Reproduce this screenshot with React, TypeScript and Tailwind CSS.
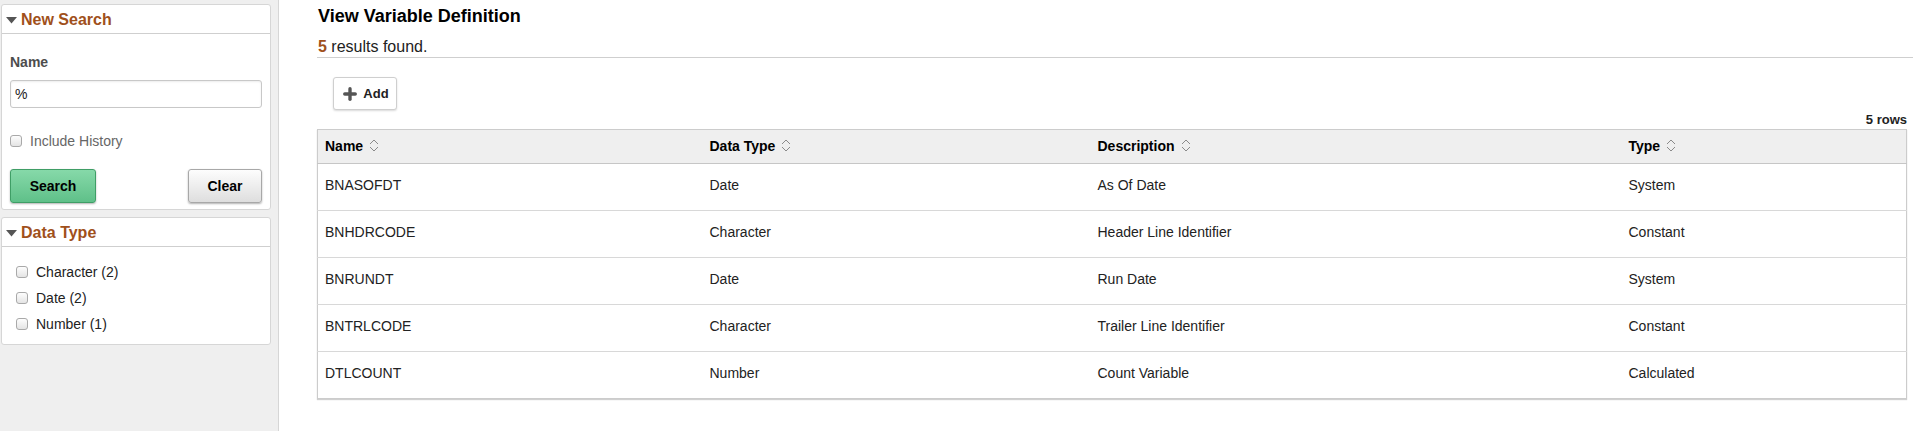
import { Plus } from "lucide-react"

const rows = [
  { name: "BNASOFDT", dataType: "Date", description: "As Of Date", type: "System" },
  { name: "BNHDRCODE", dataType: "Character", description: "Header Line Identifier", type: "Constant" },
  { name: "BNRUNDT", dataType: "Date", description: "Run Date", type: "System" },
  { name: "BNTRLCODE", dataType: "Character", description: "Trailer Line Identifier", type: "Constant" },
  { name: "DTLCOUNT", dataType: "Number", description: "Count Variable", type: "Calculated" },
]

const facets = ["Character (2)", "Date (2)", "Number (1)"]

function Caret() {
  return (
    <svg width="11" height="7" viewBox="0 0 11 7" className="shrink-0">
      <path d="M0 0 L11 0 L5.5 6.5 Z" fill="#555" />
    </svg>
  )
}

function SortIcon() {
  return (
    <svg width="10" height="13" viewBox="0 0 10 13" className="ml-[6px] inline-block align-[-1px]">
      <path d="M1 5 L5 1 L9 5" fill="none" stroke="#8a8a8a" strokeWidth="1" />
      <path d="M1 8 L5 12 L9 8" fill="none" stroke="#8a8a8a" strokeWidth="1" />
    </svg>
  )
}

function Checkbox() {
  return (
    <span className="inline-block h-[12px] w-[12px] shrink-0 rounded-[3px] border border-[#a9a9a9] bg-gradient-to-b from-[#fdfdfd] to-[#e4e4e4]" />
  )
}

function PanelHeader({ title }: { title: string }) {
  return (
    <div className="flex h-[29px] items-center gap-[4px] border-b border-[#cfcfcf] pl-[4px] pt-[2px]">
      <Caret />
      <span className="text-[16px] font-bold text-[#a0501b]">{title}</span>
    </div>
  )
}

export default function App() {
  return (
    <div className="flex h-[431px] w-[1924px] overflow-hidden bg-white font-['Liberation_Sans',Arial,sans-serif] text-[#222]">
      {/* Sidebar */}
      <aside className="w-[279px] shrink-0 border-r border-[#d6d6d6] bg-[#efefef] pt-[4px]">
        <div className="ml-[1px] w-[270px] rounded-[3px] border border-[#d6d6d6] bg-white">
          <PanelHeader title="New Search" />
          <div className="px-[8px] pb-[6px]">
            <div className="mt-[20px] text-[14px] font-bold leading-[16px] text-[#4d4d4d]">Name</div>
            <div className="mt-[10px] flex h-[28px] items-center rounded-[3px] border border-[#c8c8c8] pl-[4px] text-[14px] shadow-[inset_0_1px_2px_rgba(0,0,0,0.08)]">
              %
            </div>
            <div className="mt-[26px] flex h-[14px] items-center gap-[8px] text-[14px] text-[#666]">
              <Checkbox />
              <span>Include History</span>
            </div>
            <div className="mt-[21px] flex justify-between">
              <button className="h-[34px] w-[86px] rounded-[3px] border border-[#3f9e66] bg-gradient-to-b from-[#86d9a9] to-[#5fc089] text-[14px] font-bold text-black shadow-[0_1px_2px_rgba(0,0,0,0.3)]">
                Search
              </button>
              <button className="h-[34px] w-[74px] rounded-[3px] border border-[#a8a8a8] bg-gradient-to-b from-[#fdfdfd] to-[#dedede] text-[14px] font-bold text-black shadow-[0_1px_2px_rgba(0,0,0,0.3)]">
                Clear
              </button>
            </div>
          </div>
        </div>

        <div className="ml-[1px] mt-[7px] w-[270px] rounded-[3px] border border-[#d6d6d6] bg-white">
          <PanelHeader title="Data Type" />
          <div className="flex flex-col gap-[10px] px-[14px] pb-[12px] pt-[17px]">
            {facets.map((f) => (
              <div key={f} className="flex h-[16px] items-center gap-[8px] text-[14px] text-[#222]">
                <Checkbox />
                <span>{f}</span>
              </div>
            ))}
          </div>
        </div>
      </aside>

      {/* Main */}
      <main className="flex-1 pl-[38px] pr-[12px]">
        <div className="flex h-[30px] items-center pl-[1px] pt-[2px] text-[18px] font-bold text-black">View Variable Definition</div>
        <div className="h-[28px] border-b border-[#cfcfcf] pl-[1px] pt-[7px] text-[16px] leading-[20px] text-[#222]">
          <span className="font-bold text-[#a0501b]">5</span> results found.
        </div>

        <button className="ml-[16px] mt-[19px] flex h-[33px] w-[64px] items-center justify-center gap-[4px] rounded-[3px] border border-[#cfcfcf] bg-white text-[13px] font-bold text-[#222] shadow-[0_1px_2px_rgba(0,0,0,0.15)]">
          <Plus size={18} strokeWidth={4.5} color="#555" />
          Add
        </button>

        <div className="mr-[6px] flex h-[19px] items-center justify-end text-[13px] font-bold text-[#222]">5 rows</div>

        <table className="mr-[6px] w-[1590px] table-fixed border-collapse border border-[#cccccc] text-[14px] shadow-[0_1px_1px_#d0d0d0]">
          <colgroup>
            <col className="w-[385px]" />
            <col className="w-[388px]" />
            <col className="w-[531px]" />
            <col />
          </colgroup>
          <thead>
            <tr className="h-[34px] border-b border-[#c6c6c6] bg-[#efefef] text-left">
              {["Name", "Data Type", "Description", "Type"].map((h) => (
                <th key={h} className="pl-[7px] text-[14px] font-bold text-black">
                  {h}
                  <SortIcon />
                </th>
              ))}
            </tr>
          </thead>
          <tbody>
            {rows.map((r) => (
              <tr key={r.name} className="h-[47px] border-b border-[#d8d8d8] last:border-b-0">
                <td className="pb-[3px] pl-[7px]">{r.name}</td>
                <td className="pb-[3px] pl-[7px]">{r.dataType}</td>
                <td className="pb-[3px] pl-[7px]">{r.description}</td>
                <td className="pb-[3px] pl-[7px]">{r.type}</td>
              </tr>
            ))}
          </tbody>
        </table>
      </main>
    </div>
  )
}
